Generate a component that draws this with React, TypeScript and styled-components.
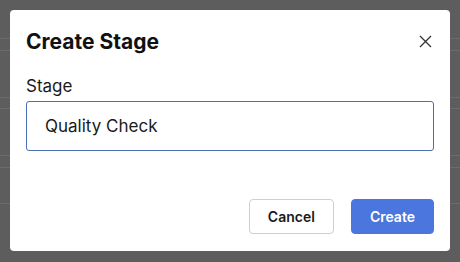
import styled, { createGlobalStyle } from "styled-components";

const GlobalStyle = createGlobalStyle`
  html, body {
    margin: 0;
    padding: 0;
  }
  body {
    font-family: Inter, "Noto Sans", sans-serif;
    background: #5d5d5d;
  }
`;

const Backdrop = styled.div`
  position: relative;
  width: 460px;
  height: 262px;
  overflow: hidden;
  background: #5d5d5d;
  padding: 10px;
  box-sizing: border-box;
`;

const RowLines = styled.div`
  position: absolute;
  inset: 0;
  display: flex;
  flex-direction: column;
  padding-top: 38px;
`;

const RowLine = styled.div<{ $gap: number }>`
  height: 1px;
  background: #6b6b6b;
  margin-bottom: ${(p) => p.$gap}px;
`;

const Modal = styled.div`
  position: relative;
  background: #fff;
  border-radius: 4px;
  height: 241px;
  padding: 16px;
  box-sizing: border-box;
  display: flex;
  flex-direction: column;
`;

const Header = styled.div`
  display: flex;
  align-items: center;
  justify-content: space-between;
  height: 30px;
`;

const Title = styled.h2`
  margin: 0;
  font-size: 21px;
  font-weight: 700;
  color: #111;
`;

const CloseButton = styled.button`
  border: none;
  background: none;
  padding: 0;
  width: 16px;
  height: 16px;
  display: flex;
  align-items: center;
  justify-content: center;
  margin-right: 1px;
  cursor: pointer;
`;

const Field = styled.div`
  display: flex;
  flex-direction: column;
  gap: 5px;
  margin-top: 20px;
`;

const Label = styled.label`
  font-size: 17px;
  color: #1a1a1a;
  line-height: 20px;
`;

const Input = styled.input`
  height: 50px;
  box-sizing: border-box;
  border: 1px solid #4d6fb3;
  border-radius: 3px;
  padding: 0 18px;
  font-family: inherit;
  font-size: 17px;
  color: #1a1a1a;
  outline: none;
`;

const Footer = styled.div`
  margin-top: auto;
  display: flex;
  justify-content: flex-end;
  gap: 17px;
  padding-bottom: 1px;
`;

const Button = styled.button<{ $primary?: boolean }>`
  height: 35px;
  padding: 0 18px;
  border-radius: 4px;
  font-family: inherit;
  font-size: 14px;
  font-weight: 600;
  border: 1px solid ${(p) => (p.$primary ? "#4a76dd" : "#cfcfcf")};
  background: ${(p) => (p.$primary ? "#4a76dd" : "#fff")};
  color: ${(p) => (p.$primary ? "#fff" : "#1a1a1a")};
  cursor: pointer;
`;

const lineGaps = [11, 46, 10, 46, 11, 35, 10];

export default function App() {
  return (
    <>
      <GlobalStyle />
      <Backdrop>
        <RowLines>
          {lineGaps.map((g, i) => (
            <RowLine key={i} $gap={g} />
          ))}
        </RowLines>
        <Modal>
          <Header>
            <Title>Create Stage</Title>
            <CloseButton aria-label="Close">
              <svg width="13" height="13" viewBox="0 0 13 13">
                <path d="M1 1 L12 12 M12 1 L1 12" stroke="#333" strokeWidth="1.3" />
              </svg>
            </CloseButton>
          </Header>
          <Field>
            <Label>Stage</Label>
            <Input defaultValue="Quality Check" />
          </Field>
          <Footer>
            <Button>Cancel</Button>
            <Button $primary>Create</Button>
          </Footer>
        </Modal>
      </Backdrop>
    </>
  );
}
